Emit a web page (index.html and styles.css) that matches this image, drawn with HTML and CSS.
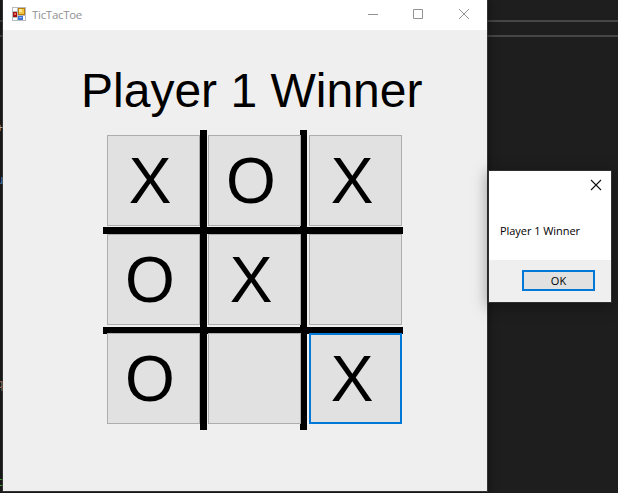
FILE: index.html
```html
<!DOCTYPE html>
<html lang="en">
<head>
<meta charset="utf-8">
<title>TicTacToe</title>
<link rel="stylesheet" href="styles.css">
</head>
<body>
<main class="desktop">
  <div class="rule rule-a"></div>
  <div class="rule rule-b"></div>
  <span class="code code-plus">+</span>
  <span class="code code-blue">u</span>
  <span class="code code-orange">q</span>
  <span class="code code-green">t</span>

  <section class="window">
    <header class="titlebar">
      <svg class="app-icon" width="14" height="14" viewBox="0 0 14 14" shape-rendering="crispEdges">
        <path fill="#b9bbc0" d="M0 0h14v14H0z"/>
        <path fill="#fff" d="M1 1h4v3H1zM1 11h4v2H1zM6 9h1v4H6zM11 9h2v4h-2z"/>
        <path fill="#b97d0c" d="M6 1h7v7H6z"/>
        <path fill="#f3c540" d="M7 2h5v5H7z"/>
        <path fill="#ffe79b" d="M7 2h3v3H7z"/>
        <path fill="#a80f0f" d="M1 5h4v5H1z"/>
        <path fill="#e06a5c" d="M2 6h2v2H2z"/>
        <path fill="#3d72d6" d="M6 9h5v4H6z"/>
        <path fill="#8bb4f5" d="M7 10h3v1H7z"/>
      </svg>
      <span class="caption">TicTacToe</span>
      <svg class="controls" width="102" height="12" viewBox="0 0 102 12" fill="none" stroke="#929292">
        <path d="M0 6.5h10M45.500 1.500h9v9h-9zM91 1l10 10M101 1l-10 10"/>
      </svg>
    </header>
    <h1 class="result">Player 1 Winner</h1>
    <div class="board">
      <div class="line down first"></div>
      <div class="line down second"></div>
      <div class="line across upper"></div>
      <div class="line across lower"></div>
      <button class="cell">X</button>
      <button class="cell">O</button>
      <button class="cell">X</button>
      <button class="cell">O</button>
      <button class="cell">X</button>
      <button class="cell"></button>
      <button class="cell">O</button>
      <button class="cell"></button>
      <button class="cell focused">X</button>
    </div>
  </section>

  <section class="dialog">
    <div class="dialog-body">
      <svg class="dialog-close" width="12" height="12" viewBox="0 0 12 12" stroke="#111" stroke-width="1.100"><path d="M1 1l10 10M11 1L1 11"/></svg>
      <p class="message">Player 1 Winner</p>
    </div>
    <footer class="dialog-footer"><button class="ok">OK</button></footer>
  </section>
</main>
</body>
</html>
```
FILE: styles.css
```css
* { box-sizing: border-box; }
body { margin: 0; }
button { padding: 0; border-radius: 0; color: #000; }

.desktop {
  position: relative;
  width: 618px;
  height: 493px;
  overflow: hidden;
  background: #1e1e1e;
}
.rule { position: absolute; left: 0; width: 618px; height: 2px; background: #464648; }
.rule-a { top: 20px; }
.rule-b { top: 35px; }
.code {
  position: absolute;
  left: -4px;
  font: 13px/16px "Liberation Mono", monospace;
}
.code-plus { top: 121px; color: #d0d0d0; }
.code-blue { top: 173px; color: #6cb4f0; }
.code-orange { top: 377px; color: #d8906c; }
.code-green { top: 475px; color: #57b545; }

.window {
  position: absolute;
  left: 3px;
  top: 0;
  width: 484px;
  height: 491px;
  background: #efefef;
  box-shadow: 0 0 0 1px rgba(70, 70, 70, .6), 0 0 9px 2px rgba(0, 0, 0, .4);
}
.titlebar {
  display: flex;
  align-items: center;
  height: 30px;
  padding: 0 17px 2px 9px;
  background: #fff;
}
.caption {
  margin-left: 6px;
  padding-top: 1px;
  font: 11.500px/16px "Open Sans", sans-serif;
  letter-spacing: -.3px;
  color: #929292;
}
.controls { margin-left: auto; }
.result {
  margin: 33px 0 0 78px;
  font: 48px/56px "Liberation Sans", Arial, sans-serif;
  white-space: nowrap;
}
.board {
  position: relative;
  display: grid;
  grid-template-columns: repeat(3, 93px);
  grid-template-rows: repeat(3, 91px);
  gap: 8px;
  width: 300px;
  height: 300px;
  margin: 11px 0 0 100px;
  padding: 5px 0 0 4px;
}
.line { position: absolute; background: #000; }
.down { top: 0; width: 7px; height: 300px; }
.first { left: 97px; }
.second { left: 197px; }
.across { left: 0; width: 300px; height: 7px; }
.upper { top: 97px; }
.lower { top: 197px; }
.cell {
  position: relative;
  padding: 2px 7px 0 0;
  border: 1px solid #adadad;
  background: #e1e1e1;
  font: 64px/87px "Liberation Sans", Arial, sans-serif;
}
.focused { border: 2px solid #0078d7; line-height: 85px; }

.dialog {
  position: absolute;
  left: 489px;
  top: 171px;
  width: 122px;
  height: 131px;
  background: #fff;
  box-shadow: 0 0 0 1px #303030, 0 3px 14px 2px rgba(0, 0, 0, .35);
  font: 11px/16px "Open Sans", sans-serif;
}
.dialog-body { display: flex; flex-direction: column; height: 89px; padding: 8px 9px 0 11px; }
.dialog-close { align-self: flex-end; }
.message { margin: 32px 0 0; white-space: nowrap; letter-spacing: -.05px; }
.dialog-footer {
  display: flex;
  justify-content: flex-end;
  height: 42px;
  padding: 10px 16px 0 0;
  background: #efefef;
}
.ok {
  width: 73px;
  height: 21px;
  border: 2px solid #0078d7;
  background: #e1e1e1;
  font: 11px/17px "Open Sans", sans-serif;
}
```
